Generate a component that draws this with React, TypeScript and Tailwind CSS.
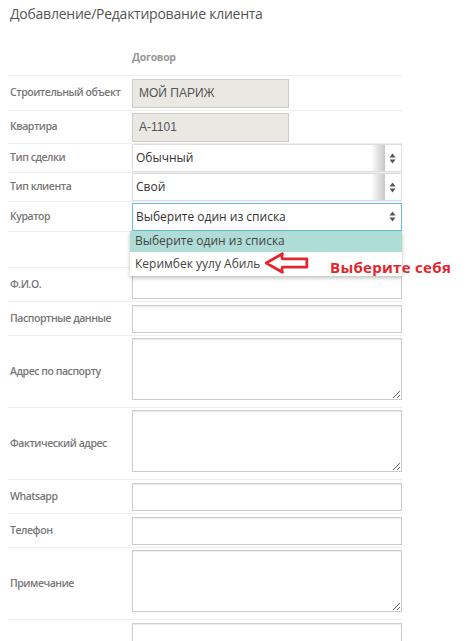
import React from 'react';

type Field = {
  label: string;
  kind: 'input' | 'textarea';
};

const bottomFields: Field[] = [
  { label: 'Ф.И.О.', kind: 'input' },
  { label: 'Паспортные данные', kind: 'input' },
  { label: 'Адрес по паспорту', kind: 'textarea' },
  { label: 'Фактический адрес', kind: 'textarea' },
  { label: 'Whatsapp', kind: 'input' },
  { label: 'Телефон', kind: 'input' },
  { label: 'Примечание', kind: 'textarea' },
  { label: '', kind: 'input' },
];

function SortArrows() {
  return (
    <svg width="7" height="11" viewBox="0 0 7 11" className="shrink-0">
      <path d="M3.5 0.5 L6.5 4.5 L0.5 4.5 Z" fill="#555" />
      <path d="M3.5 10.5 L6.5 6.5 L0.5 6.5 Z" fill="#555" />
    </svg>
  );
}

function FakeSelect({ value, focused }: { value: string; focused?: boolean }) {
  return (
    <div
      className={`flex h-[28px] w-[270px] items-center border bg-white pl-[3px] pr-[5px] text-[12px] text-[#333] ${
        focused ? 'border-[#66bfdd]' : 'border-[#ddd]'
      }`}
    >
      <span className="flex-1">{value}</span>
      {!focused && (
        <div className="mr-[4px] h-full w-[14px] bg-gradient-to-r from-white to-[#c8c8c8]" />
      )}
      <SortArrows />
    </div>
  );
}

function Row({
  label,
  children,
  className = '',
}: {
  label: string;
  children?: React.ReactNode;
  className?: string;
}) {
  return (
    <div className={`flex items-center border-b border-[#eee] ${className}`}>
      <div className="w-[124px] shrink-0 whitespace-nowrap pl-[2px] text-[10.5px] font-semibold tracking-[-0.45px] text-[#777]">
        {label}
      </div>
      <div className="relative flex-1">{children}</div>
    </div>
  );
}

export default function App() {
  return (
    <div
      className="min-h-screen bg-white pl-[8px]"
      style={{ fontFamily: '"Open Sans", "Noto Sans", sans-serif' }}
    >
      <h1 className="pt-[4px] pl-[2px] text-[14px] leading-[20px] font-normal tracking-[-0.25px] text-[#555]">
        Добавление/Редактирование клиента
      </h1>

      <div className="relative mt-[16px] w-[394px]">
        <div className="flex h-[36px] items-center border-b border-[#eee]">
          <div className="w-[124px] shrink-0" />
          <div className="text-[10.5px] font-bold tracking-[-0.3px] text-[#999]">Договор</div>
        </div>

        <Row label="Строительный объект" className="h-[35px]">
          <div
            className="flex h-[29px] w-[157px] items-center border border-[#ccc] bg-[#eae8e3] pl-[6px] text-[12px] text-[#555]"
            style={{ fontFamily: '"Liberation Sans", Arial, sans-serif' }}
          >
            МОЙ ПАРИЖ
          </div>
        </Row>

        <Row label="Квартира" className="h-[33px]">
          <div
            className="flex h-[29px] w-[157px] items-center border border-[#ccc] bg-[#eae8e3] pl-[6px] text-[12px] text-[#555]"
            style={{ fontFamily: '"Liberation Sans", Arial, sans-serif' }}
          >
            A-1101
          </div>
        </Row>

        <Row label="Тип сделки" className="h-[29px]">
          <FakeSelect value="Обычный" />
        </Row>

        <Row label="Тип клиента" className="h-[29px]">
          <FakeSelect value="Свой" />
        </Row>

        <Row label="Куратор" className="h-[30px]">
          <FakeSelect value="Выберите один из списка" focused />

          <div className="absolute top-[28px] left-[-2px] z-10 w-[272px] bg-white text-[12px] text-[#444] shadow-[0_2px_4px_rgba(0,0,0,0.25)]">
            <div className="flex h-[21px] items-center bg-[#b0dcd6] pl-[5px]">
              Выберите один из списка
            </div>
            <div className="flex h-[24px] items-center pl-[5px]">Керимбек уулу Абиль</div>
          </div>

          <div className="absolute top-[48px] left-[130px] z-20 flex items-start">
            <svg width="50" height="24" viewBox="0 0 50 26">
              <path
                d="M2.5 13 L20 3 Q19 6 20 8.5 L46.5 8.5 L46.5 17.5 L20 17.5 Q19 20 20 23 Z"
                fill="white"
                stroke="#e3262b"
                strokeWidth="3"
                strokeLinejoin="round"
              />
            </svg>
            <span className="mt-[6px] ml-[18px] whitespace-nowrap text-[15px] leading-[20px] font-bold tracking-[0.3px] text-[#e3262b]">
              Выберите себя
            </span>
          </div>
        </Row>

        <Row label="" className="h-[36px]" />

        {bottomFields.map((field, i) => (
          <Row
            key={i}
            label={field.label}
            className={field.kind === 'textarea' ? 'h-[72px]' : 'h-[34px]'}
          >
            {field.kind === 'textarea' ? (
              <textarea className="mb-[5px] block h-[62px] w-[270px] border border-[#ccc] bg-white shadow-[inset_0_1px_1px_rgba(0,0,0,0.08)] outline-none" />
            ) : (
              <input className="block h-[28px] w-[270px] border border-[#ccc] bg-white shadow-[inset_0_1px_1px_rgba(0,0,0,0.08)] outline-none" />
            )}
          </Row>
        ))}
      </div>
    </div>
  );
}
